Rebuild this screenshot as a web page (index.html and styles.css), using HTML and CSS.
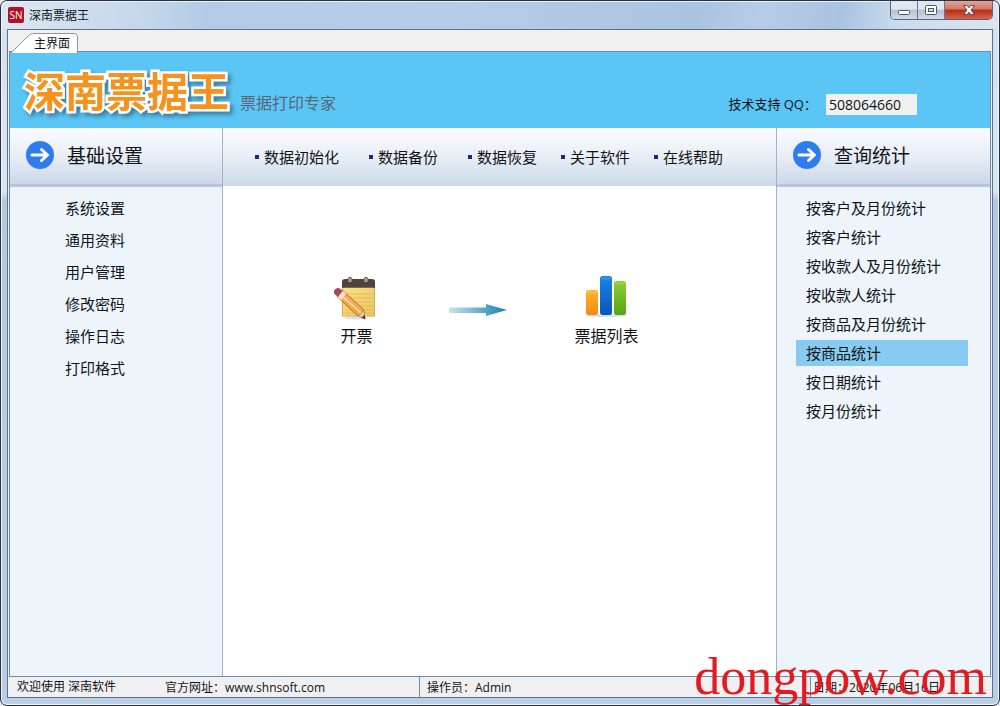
FILE: index.html
```html
<!DOCTYPE html>
<html lang="zh-CN">
<head>
<meta charset="utf-8">
<title>深南票据王</title>
<link rel="stylesheet" href="styles.css">
</head>
<body>
<div class="window">
  <header class="titlebar">
    <span class="app-icon">SN</span>
    <span class="app-title">深南票据王</span>
    <div class="controls">
      <button class="control minimize" aria-label="最小化"><svg width="14" height="8" viewBox="0 0 14 8"><rect x="1.5" y="2.5" width="11" height="4" rx="1" fill="#fff" stroke="#4d5468"/></svg></button>
      <button class="control maximize" aria-label="最大化"><svg width="14" height="12" viewBox="0 0 14 12"><rect x="1.5" y="1.5" width="11" height="9" rx="1" fill="#fff" stroke="#4d5468"/><rect x="4.5" y="4.5" width="5" height="3" fill="#d5dfea" stroke="#4d5468"/></svg></button>
      <button class="control close" aria-label="关闭"><svg width="14" height="12" viewBox="0 0 14 12"><path d="M1.5 1.5h3.6L7 3.8l1.9-2.3h3.6L9 6l3.5 4.5H8.9L7 8.2l-1.9 2.3H1.500L5 6z" fill="#fff" stroke="#6d4650"/></svg></button>
    </div>
  </header>

  <div class="client">
    <div class="tabs" role="tablist">
      <button class="tab" role="tab" aria-selected="true">
        <svg class="tab-shape" viewBox="0 0 67 20" width="67" height="20"><path d="M0 20 L17 3 Q19.500 .5 23 .5 H63 Q66.500 .5 66.500 4 V20" fill="#fff" stroke="#8b96a4"/></svg>
        <span class="tab-label">主界面</span>
      </button>
    </div>

    <div class="page">
      <div class="banner">
        <h1 class="logo">深南票据王</h1>
        <span class="slogan">票据打印专家</span>
        <label class="support" for="qq">技术支持 QQ<span class="colon">：</span></label>
        <input class="qq" id="qq" type="text" value="508064660" readonly>
      </div>

      <div class="columns">
        <aside class="side left">
          <h2 class="side-head">
            <svg class="go" width="28" height="28" viewBox="0 0 28 28"><circle cx="14" cy="14" r="14" fill="#2f7cf0"/><path d="M6 14H21M15.500 8.500L21.500 14L15.500 19.500" fill="none" stroke="#fff" stroke-width="3" stroke-linecap="round" stroke-linejoin="round"/></svg>
            <span class="side-title">基础设置</span>
          </h2>
          <nav class="menu settings">
            <a href="#">系统设置</a>
            <a href="#">通用资料</a>
            <a href="#">用户管理</a>
            <a href="#">修改密码</a>
            <a href="#">操作日志</a>
            <a href="#">打印格式</a>
          </nav>
        </aside>

        <main class="main">
          <nav class="topnav">
            <a class="wide" href="#">数据初始化</a>
            <a class="wide" href="#">数据备份</a>
            <a href="#">数据恢复</a>
            <a href="#">关于软件</a>
            <a href="#">在线帮助</a>
          </nav>
          <div class="flow">
            <a class="step" href="#">
              <svg width="46" height="46" viewBox="1 -1 46 46">
                <defs>
                  <linearGradient id="paper" x1="0" y1="0" x2="1" y2="1"><stop offset="0" stop-color="#fbe48a"/><stop offset="1" stop-color="#efc65c"/></linearGradient>
                  <linearGradient id="pencil" x1="0" y1="1" x2="1" y2="0"><stop offset="0" stop-color="#ed8a2b"/><stop offset="1" stop-color="#ffc777"/></linearGradient>
                </defs>
                <ellipse cx="23" cy="43" rx="12" ry="1.500" fill="#dce0ef"/>
                <rect x="9.500" y="6" width="32" height="35" fill="url(#paper)" stroke="#d0ae50"/>
                <path d="M12 19H40M12 23H40M12 27H40M12 31H40M12 35H40M12 38H40" stroke="#d9b65b" stroke-width=".8"/>
                <path d="M9 13V7q0-3 3-3h27q3 0 3 3v6z" fill="#51423d"/>
                <path d="M10 12.500H41" stroke="#7c655b"/>
                <path d="M15 7V3.500q2-3 4 0V7M31 7V3.500q2-3 4 0V7" fill="#aaa19a" stroke="#5c5551"/>
                <path d="M3.500 21L9 15L31 35L25 41z" fill="url(#pencil)" stroke="#b76b28"/>
                <path d="M6 18.500L28 38" stroke="#ffe1ab" stroke-width="1.500"/>
                <path d="M25 41L31 35L32 44z" fill="#edc39a" stroke="#a9785a" stroke-width=".7"/>
                <path d="M28.500 42.500L31.500 40L32.500 44.500z" fill="#6c2f32"/>
                <path d="M5 22.500L10 16L13 18.500L8 25z" fill="#f0e4dc"/>
                <path d="M1.500 19Q0 16 2.500 14Q5 12 7.500 14L9.500 16L5 21.500z" fill="#a34b59"/>
              </svg>
              <span>开票</span>
            </a>
            <svg class="arrow" width="66" height="14" viewBox="0 0 66 14">
              <defs><linearGradient id="flowfade" gradientUnits="userSpaceOnUse" x1="0" y1="0" x2="58" y2="0"><stop offset="0" stop-color="#cfe0e8"/><stop offset=".6" stop-color="#5aa8c8"/><stop offset="1" stop-color="#237fad"/></linearGradient></defs>
              <path d="M0 4.500H37V1L58 7L37 13V10H0z" fill="url(#flowfade)"/>
            </svg>
            <a class="step" href="#">
              <svg width="46" height="46" viewBox="0 0 46 46">
                <defs>
                  <linearGradient id="orange" x1="0" y1="0" x2="0" y2="1"><stop offset="0" stop-color="#ffb52e"/><stop offset="1" stop-color="#f28a12"/></linearGradient>
                  <linearGradient id="blue" x1="0" y1="0" x2="0" y2="1"><stop offset="0" stop-color="#1686e6"/><stop offset="1" stop-color="#0a55b4"/></linearGradient>
                  <linearGradient id="green" x1="0" y1="0" x2="0" y2="1"><stop offset="0" stop-color="#8ed02e"/><stop offset="1" stop-color="#56a31c"/></linearGradient>
                </defs>
                <ellipse cx="22" cy="41.500" rx="20" ry="1.500" fill="#d9dde0"/>
                <rect x="2" y="16" width="12" height="25" rx="2.500" fill="url(#orange)"/>
                <rect x="16" y="2" width="12" height="39" rx="2.500" fill="url(#blue)"/>
                <rect x="30" y="7" width="12" height="34" rx="2.500" fill="url(#green)"/>
                <path d="M4 18.500H12M18 4.500H26M32 9.500H40" stroke="#fff" stroke-opacity=".15" stroke-width="2" stroke-linecap="round"/>
              </svg>
              <span>票据列表</span>
            </a>
          </div>
        </main>

        <aside class="side right">
          <h2 class="side-head">
            <svg class="go" width="28" height="28" viewBox="0 0 28 28"><circle cx="14" cy="14" r="14" fill="#2f7cf0"/><path d="M6 14H21M15.500 8.500L21.500 14L15.500 19.500" fill="none" stroke="#fff" stroke-width="3" stroke-linecap="round" stroke-linejoin="round"/></svg>
            <span class="side-title">查询统计</span>
          </h2>
          <nav class="menu reports">
            <a href="#">按客户及月份统计</a>
            <a href="#">按客户统计</a>
            <a href="#">按收款人及月份统计</a>
            <a href="#">按收款人统计</a>
            <a href="#">按商品及月份统计</a>
            <a class="selected" href="#">按商品统计</a>
            <a href="#">按日期统计</a>
            <a href="#">按月份统计</a>
          </nav>
        </aside>
      </div>
    </div>

    <footer class="status">
      <div class="status-cell site"><span class="welcome">欢迎使用 深南软件</span><span>官方网址<span class="colon">：</span>www.shnsoft.com</span></div>
      <div class="status-cell operator">操作员<span class="colon">：</span>Admin</div>
      <div class="status-cell date">日期<span class="colon">：</span>2020年06月16日</div>
    </footer>
  </div>
  <div class="watermark">dongpow.com</div>
</div>
</body>
</html>
```

FILE: styles.css
```css
* { box-sizing: border-box; }

body {
  margin: 0;
  background: #e4e9ef;
  color: #101418;
  font: 12px/18px "Open Sans", "Noto Sans CJK SC", sans-serif;
}

a { color: inherit; text-decoration: none; }
h1, h2 { margin: 0; font-weight: normal; }
button, input { font: inherit; color: inherit; }

.window {
  position: relative;
  display: flex;
  flex-direction: column;
  min-height: 100vh;
  padding: 0 6px 7px;
  border: 1px solid #27313f;
  border-radius: 7px;
  background: linear-gradient(#d3e0ee 0, #dbe6f1 190px, #b4c8e0 200px, #b9cde5 100%);
  box-shadow: inset 0 0 0 1px #eef5fb;
}

.titlebar {
  display: flex;
  align-items: center;
  gap: 5px;
  height: 28px;
  margin: 0 -5px;
  padding-left: 6px;
  border-radius: 6px 6px 0 0;
  background: linear-gradient(100deg, #dde8f3 0, #c3d6ea 15%, #b3cbe5 21%, #b5cde7 45%, #a9c4e1 70%, #b7cde6 76%, #a8c3e0 84%, #cbdcec 90%, #d9e5f0 100%);
  box-shadow: inset 0 1px 0 #e9f2fa;
}

.app-icon {
  width: 16px;
  height: 16px;
  border-radius: 2px;
  background: #b4111f;
  color: #fff;
  font: 10px/16px "Open Sans", sans-serif;
  text-align: center;
}

.app-title, .tab-label { font-family: "Noto Sans CJK SC", sans-serif; }
.colon { font-family: "Noto Sans CJK TC", sans-serif; }

.controls {
  display: flex;
  align-self: flex-start;
  margin: 0 5px 0 auto;
  border: 1px solid #5d6577;
  border-top: 0;
  border-radius: 0 0 5px 5px;
  overflow: hidden;
}

.control {
  display: flex;
  align-items: center;
  justify-content: center;
  width: 27px;
  height: 18px;
  padding: 0;
  border: 0;
  border-right: 1px solid #6d778a;
  background: linear-gradient(#dfe8f1 45%, #b3c1d1 50%, #cfdbe8);
}

.minimize { padding-top: 4px; }

.close {
  width: 47px;
  border-right: 0;
  background: linear-gradient(#e4a597, #d27867 45%, #b92c18 50%, #d9604a);
}

.client {
  display: flex;
  flex: 1;
  flex-direction: column;
  border: 1px solid #5c728c;
  background: #f0f0f0;
}

.tabs { display: flex; height: 21px; padding: 3px 0 0 3px; }

.tab {
  position: relative;
  width: 67px;
  height: 20px;
  padding: 0;
  border: 0;
  background: none;
  text-align: left;
}

.tab-shape { position: absolute; inset: 0; }
.tab-label { position: relative; padding-left: 23px; }

.page {
  display: flex;
  flex: 1;
  flex-direction: column;
  margin: 0 1px;
  border: 1px solid #6a8db0;
}

.banner {
  display: flex;
  align-items: center;
  height: 76px;
  padding: 0 73px 0 14px;
  background: #5bc6f5;
}

.logo {
  padding-bottom: 2px;
  color: #f6921e;
  font: 700 41px/60px "Noto Sans CJK SC", sans-serif;
  -webkit-text-stroke: 5px #fff;
  paint-order: stroke fill;
  filter: drop-shadow(3px 3px 2px #397f9f);
}

.slogan { padding: 26px 0 0 11px; color: #566877; font-size: 16px; }
.support { margin-left: auto; padding-top: 28px; font-size: 13px; }

.qq {
  width: 91px;
  height: 21px;
  margin: 28px 0 0 9px;
  padding: 0 3px;
  border: 0;
  background: #f0f0f0;
  font-size: 14px;
}

.columns {
  display: grid;
  flex: 1;
  grid-template-columns: 213px 1fr 214px;
}

.side { background: #edf5fb; }
.left { border-right: 1px solid #9fb3cb; }
.right { border-left: 1px solid #9fb3cb; }

.side-head {
  display: flex;
  align-items: center;
  gap: 13px;
  height: 59px;
  padding: 0 16px 2px;
  border-bottom: 3px solid #b7c4dc;
  background: linear-gradient(#fafcfe, #e8eef6 50%, #ccd7e9);
  font-size: 19px;
}

.side-title { padding-top: 2px; }

.menu { display: flex; flex-direction: column; font-size: 15px; }
.settings { padding: 5px 20px 0 55px; line-height: 32px; }
.reports { gap: 3px; padding: 8px 22px 0 19px; line-height: 26px; }
.reports a { padding-left: 10px; }
.selected { background: #87ccf0; }

.main { background: #fff; }

.topnav {
  display: flex;
  gap: 24px;
  align-items: center;
  height: 58px;
  padding-left: 32px;
  background: linear-gradient(#fafcfe, #e8eef5 50%, #c9d9ea);
  font-size: 15px;
  white-space: nowrap;
}

.topnav a { display: flex; gap: 5px; align-items: center; }
.topnav a::before { content: ""; width: 4px; height: 4px; background: #1d2a7c; }
.topnav .wide { padding-right: 6px; }

.flow {
  display: flex;
  gap: 60px;
  justify-content: center;
  padding: 88px 36px 0 0;
}

.step {
  display: flex;
  flex-direction: column;
  gap: 7px;
  align-items: center;
  width: 64px;
  font-size: 16px;
}

.arrow { margin-top: 29px; }

.status { display: flex; height: 20px; line-height: 20px; }
.status-cell { padding-left: 7px; border-left: 1px solid #6a8db0; }
.site { display: flex; width: 411px; padding-left: 9px; border-left: 0; }
.welcome { width: 148px; }
.operator { width: 391px; }
.date { flex: 1; padding-left: 2px; }

.watermark {
  position: absolute;
  right: 12px;
  bottom: 0;
  color: #e21b22;
  font: 52px/56px "Liberation Serif", serif;
  pointer-events: none;
}
```
